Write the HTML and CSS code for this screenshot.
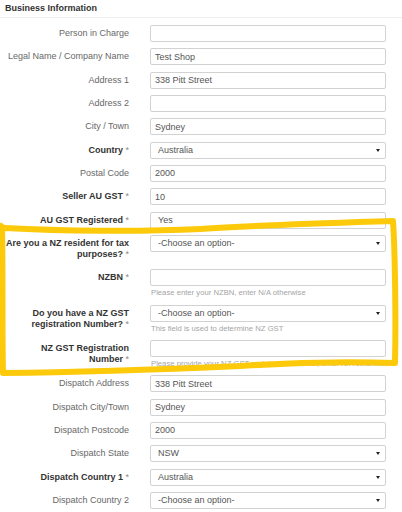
FILE: index.html
```html
<!DOCTYPE html>
<html lang="en">
<head>
<meta charset="utf-8">
<title>Business Information</title>
<link rel="stylesheet" href="styles.css">
</head>
<body>
<div class="page">
  <div class="section-title">Business Information</div>
  <form class="form">
    <div class="row">
      <label class="lbl">Person in Charge</label>
      <div class="ctl"><input class="field" type="text" value=""></div>
    </div>
    <div class="row">
      <label class="lbl">Legal Name / Company Name</label>
      <div class="ctl"><input class="field" type="text" value="Test Shop"></div>
    </div>
    <div class="row">
      <label class="lbl">Address 1</label>
      <div class="ctl"><input class="field" type="text" value="338 Pitt Street"></div>
    </div>
    <div class="row">
      <label class="lbl">Address 2</label>
      <div class="ctl"><input class="field" type="text" value=""></div>
    </div>
    <div class="row">
      <label class="lbl">City / Town</label>
      <div class="ctl"><input class="field" type="text" value="Sydney"></div>
    </div>
    <div class="row">
      <label class="lbl req">Country <span class="ast">*</span></label>
      <div class="ctl"><div class="field select"><span>Australia</span><svg class="caret" width="4" height="3" viewBox="0 0 4 3"><path d="M0 0H4L2 3Z"/></svg></div></div>
    </div>
    <div class="row">
      <label class="lbl">Postal Code</label>
      <div class="ctl"><input class="field" type="text" value="2000"></div>
    </div>
    <div class="row">
      <label class="lbl req">Seller AU GST <span class="ast">*</span></label>
      <div class="ctl"><input class="field" type="text" value="10"></div>
    </div>
    <div class="row">
      <label class="lbl req">AU GST Registered <span class="ast">*</span></label>
      <div class="ctl"><div class="field select"><span>Yes</span><svg class="caret" width="4" height="3" viewBox="0 0 4 3"><path d="M0 0H4L2 3Z"/></svg></div></div>
    </div>
    <div class="row">
      <label class="lbl req multi">Are you a NZ resident for tax<br>purposes? <span class="ast">*</span></label>
      <div class="ctl"><div class="field select"><span>-Choose an option-</span><svg class="caret" width="4" height="3" viewBox="0 0 4 3"><path d="M0 0H4L2 3Z"/></svg></div></div>
    </div>
    <div class="row">
      <label class="lbl req">NZBN <span class="ast">*</span></label>
      <div class="ctl"><input class="field" type="text" value=""><p class="help">Please enter your NZBN, enter N/A otherwise</p></div>
    </div>
    <div class="row">
      <label class="lbl req multi">Do you have a NZ GST<br>registration Number? <span class="ast">*</span></label>
      <div class="ctl"><div class="field select"><span>-Choose an option-</span><svg class="caret" width="4" height="3" viewBox="0 0 4 3"><path d="M0 0H4L2 3Z"/></svg></div><p class="help">This field is used to determine NZ GST</p></div>
    </div>
    <div class="row">
      <label class="lbl req multi">NZ GST Registration<br>Number <span class="ast">*</span></label>
      <div class="ctl"><input class="field" type="text" value=""><p class="help">Please provide your NZ GST registration number, enter N/A otherwise</p></div>
    </div>
    <div class="row">
      <label class="lbl">Dispatch Address</label>
      <div class="ctl"><input class="field" type="text" value="338 Pitt Street"></div>
    </div>
    <div class="row">
      <label class="lbl">Dispatch City/Town</label>
      <div class="ctl"><input class="field" type="text" value="Sydney"></div>
    </div>
    <div class="row">
      <label class="lbl">Dispatch Postcode</label>
      <div class="ctl"><input class="field" type="text" value="2000"></div>
    </div>
    <div class="row">
      <label class="lbl">Dispatch State</label>
      <div class="ctl"><div class="field select"><span>NSW</span><svg class="caret" width="4" height="3" viewBox="0 0 4 3"><path d="M0 0H4L2 3Z"/></svg></div></div>
    </div>
    <div class="row">
      <label class="lbl req">Dispatch Country 1 <span class="ast">*</span></label>
      <div class="ctl"><div class="field select"><span>Australia</span><svg class="caret" width="4" height="3" viewBox="0 0 4 3"><path d="M0 0H4L2 3Z"/></svg></div></div>
    </div>
    <div class="row">
      <label class="lbl">Dispatch Country 2</label>
      <div class="ctl"><div class="field select"><span>-Choose an option-</span><svg class="caret" width="4" height="3" viewBox="0 0 4 3"><path d="M0 0H4L2 3Z"/></svg></div></div>
    </div>
  </form>
  <svg class="highlight" width="402" height="512" viewBox="0 0 402 512">
    <path d="M1 226 C2 227 3 228 5 228 C60 231 140 232 200 229 C260 225 330 223 393 221 C395 250 396 320 395 363 C360 362 300 362 240 366 C170 369 90 372 3 373 C2 330 3 270 2 229"/>
  </svg>
</div>
</body>
</html>
```
FILE: styles.css
```css
html, body {
  margin: 0;
  padding: 0;
  background: #ffffff;
}

body {
  font-family: "Liberation Sans", Arial, Helvetica, sans-serif;
  font-size: 9px;
  color: #555555;
}

.page {
  position: relative;
  width: 402px;
  height: 512px;
  overflow: hidden;
}

.section-title {
  padding: 3px 5px;
  line-height: 11px;
  font-weight: bold;
  color: #333333;
  border-bottom: 1px solid #eeeeee;
  margin-bottom: 7px;
}

.form {
  margin: 0;
}

.row {
  display: grid;
  grid-template-columns: 150px 236px;
  margin-bottom: 6.33px;
  align-items: start;
}

.lbl {
  display: block;
  text-align: right;
  padding: 3px 21px 0 0;
  line-height: 11px;
  font-size: 9px;
  color: #686868;
}

.lbl.req {
  font-weight: bold;
  color: #333333;
}

.lbl.multi {
  padding-bottom: 3px;
}

.ast {
  font-weight: normal;
  color: #8a8a8a;
}

.ctl {
  display: flex;
  flex-direction: column;
}

.field {
  box-sizing: border-box;
  width: 236px;
  height: 17px;
  margin: 0;
  padding: 0 4px;
  border: 1px solid #d2d2d2;
  border-radius: 2px;
  background: #ffffff;
  font-family: "Liberation Sans", Arial, Helvetica, sans-serif;
  font-size: 9px;
  color: #555555;
  outline: none;
}

.select {
  display: flex;
  align-items: center;
  justify-content: space-between;
  padding: 0 5px 0 7px;
  line-height: 15px;
}

.caret {
  display: block;
  fill: #222222;
}

.help {
  margin: 1px 0 0 0;
  padding-left: 1px;
  line-height: 11px;
  font-size: 7.7px;
  color: #a5a5a5;
  white-space: nowrap;
}

.highlight {
  position: absolute;
  left: 0;
  top: 0;
  pointer-events: none;
  fill: none;
  stroke: #fcca0a;
  stroke-width: 6;
  stroke-linecap: round;
  stroke-linejoin: round;
}
```
